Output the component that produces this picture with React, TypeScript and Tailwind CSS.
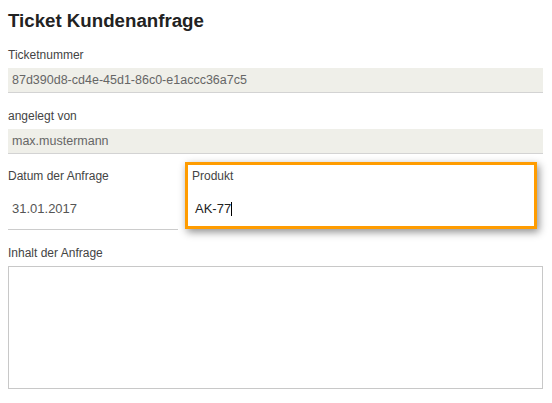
import React from "react";

export default function App() {
  return (
    <div
      className="w-[552px] h-[403px] bg-white px-2 pt-[10px] overflow-hidden"
      style={{ fontFamily: '"Liberation Sans", Arial, sans-serif' }}
    >
      <h1 className="text-[18.7px] leading-[22px] font-bold text-[#222]">Ticket Kundenanfrage</h1>

      <div className="mt-[15px]">
        <div className="text-[12px] leading-4 text-[#444]">Ticketnummer</div>
        <div className="mt-[5px] w-[535px] h-[25px] bg-[#efefe9] border-b border-[#d3d3d3] pl-1 text-[12.5px] leading-6 text-[#666]">
          87d390d8-cd4e-45d1-86c0-e1accc36a7c5
        </div>
      </div>

      <div className="mt-[15px]">
        <div className="text-[12px] leading-4 text-[#444]">angelegt von</div>
        <div className="mt-[5px] w-[535px] h-[25px] bg-[#efefe9] border-b border-[#d3d3d3] pl-1 text-[12.5px] leading-6 text-[#666]">
          max.mustermann
        </div>
      </div>

      <div className="mt-[8px] flex items-start">
        <div className="w-[170px] pt-[6px]">
          <div className="text-[12px] leading-4 text-[#444]">Datum der Anfrage</div>
          <div className="mt-[5px] h-[41px] border-b border-[#cccccc] pl-1 text-[13px] leading-[39px] text-[#555]">
            31.01.2017
          </div>
        </div>
        <div className="ml-[7px] w-[352px] h-[67px] border-[3px] border-[#ff9c00] bg-white px-1 pt-[3px] shadow-[2px_3px_8px_rgba(0,0,0,0.45)]">
          <div className="text-[12px] leading-4 text-[#444]">Produkt</div>
          <div className="mt-[5px] h-[37px] pl-[3px] text-[13px] leading-[39px] text-[#222]">
            AK-77
            <span className="inline-block w-px h-[14px] bg-black align-[-3px]" />
          </div>
        </div>
      </div>

      <div className="mt-[15px]">
        <div className="text-[12px] leading-4 text-[#444]">Inhalt der Anfrage</div>
        <div className="mt-[5px] w-[535px] h-[123px] border border-[#c8c8c8] bg-white" />
      </div>
    </div>
  );
}
